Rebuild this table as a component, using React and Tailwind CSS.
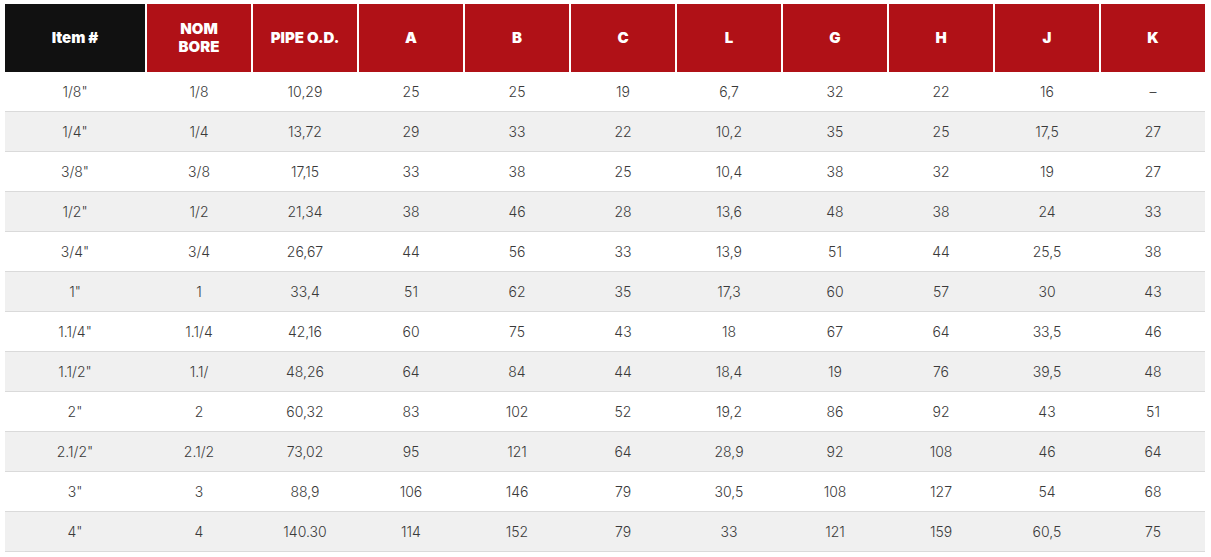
import React from 'react';

const headers = ['Item #', 'NOM\nBORE', 'PIPE O.D.', 'A', 'B', 'C', 'L', 'G', 'H', 'J', 'K'];

const rows = [
  ['1/8"', '1/8', '10,29', '25', '25', '19', '6,7', '32', '22', '16', '–'],
  ['1/4"', '1/4', '13,72', '29', '33', '22', '10,2', '35', '25', '17,5', '27'],
  ['3/8"', '3/8', '17,15', '33', '38', '25', '10,4', '38', '32', '19', '27'],
  ['1/2"', '1/2', '21,34', '38', '46', '28', '13,6', '48', '38', '24', '33'],
  ['3/4"', '3/4', '26,67', '44', '56', '33', '13,9', '51', '44', '25,5', '38'],
  ['1"', '1', '33,4', '51', '62', '35', '17,3', '60', '57', '30', '43'],
  ['1.1/4"', '1.1/4', '42,16', '60', '75', '43', '18', '67', '64', '33,5', '46'],
  ['1.1/2"', '1.1/', '48,26', '64', '84', '44', '18,4', '19', '76', '39,5', '48'],
  ['2"', '2', '60,32', '83', '102', '52', '19,2', '86', '92', '43', '51'],
  ['2.1/2"', '2.1/2', '73,02', '95', '121', '64', '28,9', '92', '108', '46', '64'],
  ['3"', '3', '88,9', '106', '146', '79', '30,5', '108', '127', '54', '68'],
  ['4"', '4', '140.30', '114', '152', '79', '33', '121', '159', '60,5', '75'],
];

const cols = 'grid grid-cols-[140px_repeat(10,minmax(0,1fr))] gap-x-[2px]';

export default function App() {
  return (
    <div className="bg-white min-h-[557px] pt-[4px] px-[5px]" style={{ fontFamily: 'Inter, "Noto Sans", sans-serif' }}>
      <div className="w-[1200px]">
        <div className={`${cols} h-[68px]`}>
          {headers.map((h, i) => (
            <div
              key={h}
              className={`flex items-center justify-center text-center text-white font-black text-[15px] leading-[18px] whitespace-pre-line ${i === 0 ? 'bg-[#111111]' : 'bg-[#b01117]'}`}
            >
              {h}
            </div>
          ))}
        </div>
        {rows.map((r, ri) => (
          <div
            key={ri}
            className={`${cols} h-10 border-b border-[#dadada] ${ri % 2 ? 'bg-[#f0f0f0]' : 'bg-white'}`}
          >
            {r.map((c, ci) => (
              <div key={ci} className="flex items-center justify-center text-[14px] font-light text-[#3a3a3a]">
                {c}
              </div>
            ))}
          </div>
        ))}
      </div>
    </div>
  );
}
